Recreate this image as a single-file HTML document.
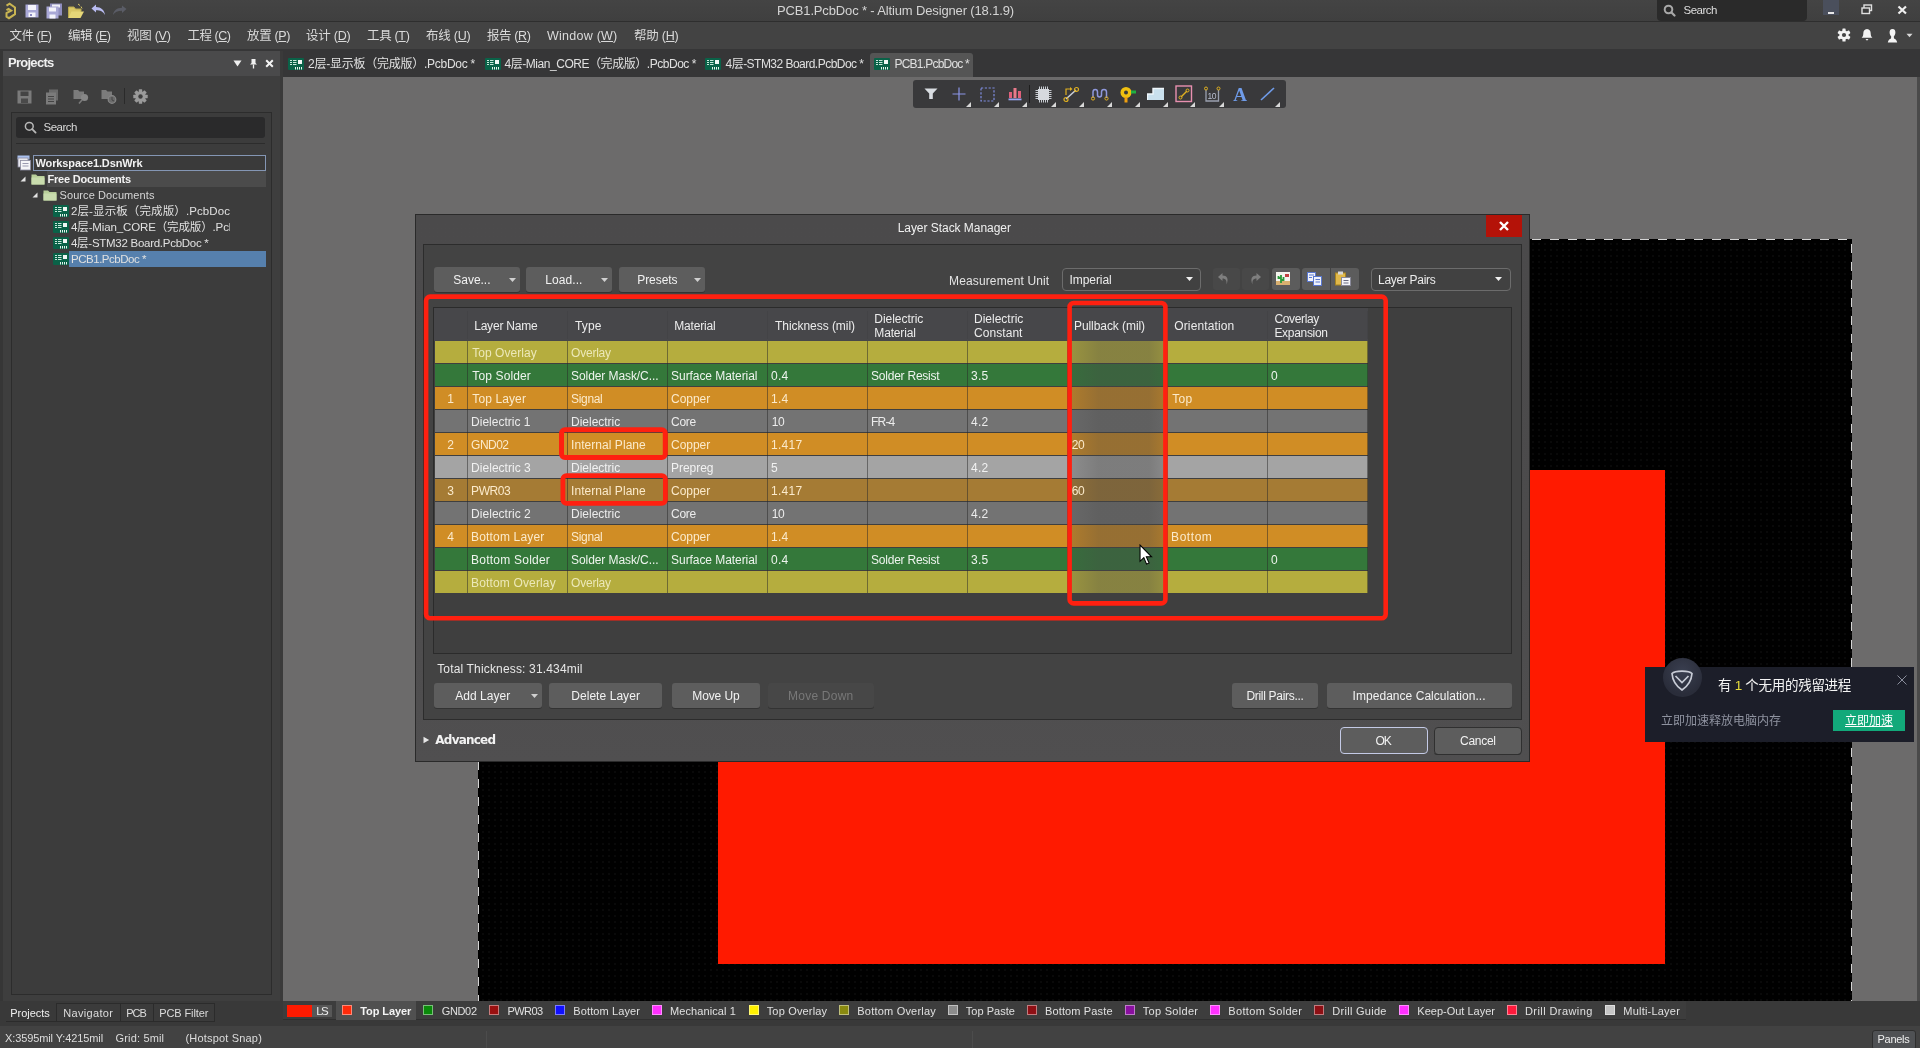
<!DOCTYPE html>
<html lang="zh-CN"><head><meta charset="utf-8"><title>PCB1.PcbDoc * - Altium Designer (18.1.9)</title>
<style>
html,body{margin:0;padding:0;}
body{width:1920px;height:1048px;overflow:hidden;background:#3e3e3e;position:relative;font-family:'Liberation Sans', 'Noto Sans CJK SC', sans-serif;font-size:12px;}
div,svg,span.t{position:absolute;box-sizing:border-box;}
span.t{white-space:pre;line-height:20px;height:20px;}
u{text-decoration:underline;text-underline-offset:1px;}
</style></head><body>
<div id="app" style="left:0;top:0;width:1920px;height:1048px;will-change:transform;">
<div style="left:0px;top:0px;width:1920px;height:22px;background:linear-gradient(180deg,#444444,#3f3f3f);"></div>
<div style="left:0px;top:21px;width:1920px;height:1px;background:#2e2e2e;"></div>
<div style="left:0px;top:22px;width:1920px;height:28px;background:#434343;"></div>
<div style="left:0px;top:49px;width:1920px;height:28px;background:#363637;"></div>
<div style="left:0px;top:51px;width:280px;height:25px;background:#4a4a4b;"></div>
<div style="left:0px;top:76px;width:283px;height:925px;background:#3e3e3e;"></div>
<div style="left:280px;top:51px;width:3px;height:950px;background:#3a3a3a;"></div>
<div style="left:0px;top:51px;width:3px;height:950px;background:#363636;"></div>
<div style="left:283px;top:77px;width:1634px;height:924px;background:#6c6b6b;"></div>
<div style="left:1917px;top:77px;width:3px;height:924px;background:#4a4a4a;"></div>
<div style="left:0px;top:1001px;width:1920px;height:25px;background:#393939;"></div>
<div style="left:0px;top:1026px;width:1920px;height:22px;background:#424242;"></div>
<div style="left:478px;top:239px;width:1374px;height:762px;background:#000000;background-image:radial-gradient(circle, #131313 0.5px, transparent 0.9px);background-size:6px 6px;background-position:2px 2px;"></div>
<svg style="left:478px;top:239px;" width="1374" height="762" viewBox="0 0 1374 762"><path d="M0.5 762 V0.5 H1373.5 V762" fill="none" stroke="#d4d4d4" stroke-width="1" stroke-dasharray="9 9" stroke-dashoffset="3"/></svg>
<div style="left:718px;top:470px;width:947px;height:494px;background:#ff1a00;"></div>
<svg style="left:4px;top:1px;" width="14" height="20" viewBox="0 0 14 20"><path d="M2.5 4.6 L5.6 2.6 L11 6.5 V13.2 L5 17.2 L2.5 15.6 V12.2 L7.2 9.6 L4.6 8 L2.5 9.2" fill="none" stroke="#c9b552" stroke-width="2" stroke-linejoin="miter"/></svg>
<svg style="left:25px;top:4px;" width="14" height="14" viewBox="0 0 14 14"><rect x="0.5" y="0.5" width="13" height="13" fill="#a9a8d6"/><rect x="3" y="1" width="8" height="5" fill="#f4f4fb"/><rect x="3.5" y="8.5" width="7" height="4.5" fill="#f4f4fb"/><rect x="5" y="10" width="2" height="2" fill="#8a89c0"/></svg>
<svg style="left:46px;top:3px;" width="17" height="16" viewBox="0 0 17 16"><rect x="4" y="0.5" width="12" height="12" fill="#8f8ebf"/><rect x="6" y="1.5" width="8" height="3" fill="#efeff8"/><rect x="0.5" y="3.5" width="12" height="12" fill="#a9a8d6"/><rect x="3" y="4.5" width="7" height="4" fill="#f4f4fb"/><rect x="3.5" y="11.5" width="6" height="4" fill="#f4f4fb"/></svg>
<svg style="left:68px;top:3px;" width="17" height="16" viewBox="0 0 17 16"><path d="M0.5 15 V4 H6 L7.5 6 H13 V8.5" fill="#d9c766" stroke="#b9a84c"/><path d="M0.5 15 L3.5 8.5 H16 L12.5 15 Z" fill="#e6d778"/><path d="M10 1 L12 2.5 M13 3.5 L14 5.5" stroke="#d9c766" stroke-width="1"/></svg>
<svg style="left:91px;top:4px;" width="15" height="12" viewBox="0 0 15 12"><path d="M0.5 4.5 L5 0.5 V3 C10 3 13.5 6 14 11 C12 7.5 9.5 6.2 5 6.2 V8.5 Z" fill="#b9bcf2"/></svg>
<svg style="left:112px;top:5px;" width="15" height="11" viewBox="0 0 15 11"><path d="M14.5 4 L10 0.5 V2.7 C5 2.7 1.5 5.5 1 10 C3 7 5.5 5.7 10 5.7 V8 Z" fill="#5a5c66"/></svg>
<span class="t" style="left:777px;top:0.5px;font-size:13px;color:#d4d4d4;letter-spacing:-0.145px;">PCB1.PcbDoc * - Altium Designer (18.1.9)</span>
<div style="left:1657px;top:0px;width:150px;height:21px;background:#2a2a2a;border-radius:0 0 4px 4px;"></div>
<svg style="left:1663px;top:4px;" width="13" height="13" viewBox="0 0 13 13"><circle cx="5.5" cy="5.5" r="3.8" fill="none" stroke="#a8a8a8" stroke-width="2"/><path d="M8.5 8.5 L11.5 11.5" stroke="#a8a8a8" stroke-width="2.2" stroke-linecap="round"/></svg>
<span class="t" style="left:1683.5px;top:0.3px;font-size:11.5px;color:#dedede;letter-spacing:-0.490px;">Search</span>
<div style="left:1823px;top:0px;width:16px;height:15px;background:#4a4f5c;"></div>
<div style="left:1828px;top:12px;width:6px;height:2px;background:#e8e8e8;"></div>
<svg style="left:1861px;top:4px;" width="12" height="11" viewBox="0 0 12 11"><rect x="3" y="1" width="7.5" height="5.5" fill="none" stroke="#e0e0e0" stroke-width="1.4"/><rect x="1" y="4" width="7.5" height="5.5" fill="#3d3d3d" stroke="#e0e0e0" stroke-width="1.4"/></svg>
<svg style="left:1897px;top:5px;" width="11" height="10" viewBox="0 0 11 10"><path d="M1.5 1.5 L9 8.5 M9 1.5 L1.5 8.5" stroke="#f0f0f0" stroke-width="2.2"/></svg>
<span class="t" style="left:9.5px;top:26.2px;font-size:12.5px;color:#dadada;letter-spacing:-0.406px;">文件 (<u>F</u>)</span>
<span class="t" style="left:68px;top:26.2px;font-size:12.5px;color:#dadada;letter-spacing:-0.440px;">编辑 (<u>E</u>)</span>
<span class="t" style="left:127px;top:26.2px;font-size:12.5px;color:#dadada;letter-spacing:-0.273px;">视图 (<u>V</u>)</span>
<span class="t" style="left:187.5px;top:26.2px;font-size:12.5px;color:#dadada;letter-spacing:-0.471px;">工程 (<u>C</u>)</span>
<span class="t" style="left:247px;top:26.2px;font-size:12.5px;color:#dadada;letter-spacing:-0.357px;">放置 (<u>P</u>)</span>
<span class="t" style="left:306px;top:26.2px;font-size:12.5px;color:#dadada;letter-spacing:-0.221px;">设计 (<u>D</u>)</span>
<span class="t" style="left:367px;top:26.2px;font-size:12.5px;color:#dadada;letter-spacing:-0.323px;">工具 (<u>T</u>)</span>
<span class="t" style="left:426px;top:26.2px;font-size:12.5px;color:#dadada;letter-spacing:-0.221px;">布线 (<u>U</u>)</span>
<span class="t" style="left:487px;top:26.2px;font-size:12.5px;color:#dadada;letter-spacing:-0.388px;">报告 (<u>R</u>)</span>
<span class="t" style="left:547px;top:26.2px;font-size:12.5px;color:#dadada;letter-spacing:0.244px;">Window (<u>W</u>)</span>
<span class="t" style="left:634px;top:26.2px;font-size:12.5px;color:#dadada;letter-spacing:-0.221px;">帮助 (<u>H</u>)</span>
<svg style="left:1837px;top:28px;" width="14" height="14" viewBox="0 0 14 14"><g transform="translate(7 7)"><circle r="4.6" fill="#f2f2f2"/><g fill="#f2f2f2"><rect x="-1.6" y="-6.6" width="3.2" height="13.2" rx="0.6"/><rect x="-1.6" y="-6.6" width="3.2" height="13.2" rx="0.6" transform="rotate(60)"/><rect x="-1.6" y="-6.6" width="3.2" height="13.2" rx="0.6" transform="rotate(120)"/></g><circle r="2.1" fill="#434343"/></g></svg>
<svg style="left:1861px;top:28px;" width="12" height="14" viewBox="0 0 12 14"><path d="M6 1 C3.3 1 2.3 3.2 2.3 5.5 C2.3 8 1.5 8.8 0.6 9.8 H11.4 C10.5 8.8 9.7 8 9.7 5.5 C9.7 3.2 8.7 1 6 1 Z" fill="#f2f2f2"/><path d="M4.5 11 H7.5 L6 12.8 Z" fill="#f2f2f2"/></svg>
<svg style="left:1887px;top:28px;" width="11" height="16" viewBox="0 0 11 16"><path d="M5.5 1 C3.2 1 2.6 2.8 2.6 4.6 C2.6 6.3 3.4 7.8 4.2 8.5 L4 10.5 C2.6 11.2 1.2 12 0.8 14.5 H10.2 C9.8 12 8.4 11.2 7 10.5 L6.8 8.5 C7.6 7.8 8.4 6.3 8.4 4.6 C8.4 2.8 7.8 1 5.5 1 Z" fill="#f4f4f4"/></svg>
<svg style="left:1906px;top:33px;" width="7" height="5" viewBox="0 0 7 5"><path d="M0.5 0.8 H6.5 L3.5 4.2 Z" fill="#d8d8d8"/></svg>
<div style="left:870px;top:53px;width:103px;height:24px;background:#555555;border-radius:3px 3px 0 0;"></div>
<svg style="left:288px;top:57.5px;" width="16" height="12" viewBox="0 0 16 12"><rect x="0" y="0" width="16" height="12" rx="1" fill="#0a6248"/><rect x="10" y="2" width="4" height="4" fill="#f0f6f4"/><path d="M2 2.5 H4 M5 2.5 H8.5 M2 4.5 H4 M5 4.5 H8.5 M2 6.5 H4 M5 6.5 H8.5" stroke="#c8eadc" stroke-width="1"/><path d="M7.5 9 V11.5 M9.5 9 V11.5 M11.5 9 V11.5 M13.5 9 V11.5" stroke="#e6f4ee" stroke-width="1"/></svg>
<span class="t" style="left:308px;top:53.5px;font-size:12px;color:#e0e0e0;letter-spacing:-0.252px;">2层-显示板（完成版）.PcbDoc *</span>
<svg style="left:484.5px;top:57.5px;" width="16" height="12" viewBox="0 0 16 12"><rect x="0" y="0" width="16" height="12" rx="1" fill="#0a6248"/><rect x="10" y="2" width="4" height="4" fill="#f0f6f4"/><path d="M2 2.5 H4 M5 2.5 H8.5 M2 4.5 H4 M5 4.5 H8.5 M2 6.5 H4 M5 6.5 H8.5" stroke="#c8eadc" stroke-width="1"/><path d="M7.5 9 V11.5 M9.5 9 V11.5 M11.5 9 V11.5 M13.5 9 V11.5" stroke="#e6f4ee" stroke-width="1"/></svg>
<span class="t" style="left:504.5px;top:53.5px;font-size:12px;color:#e0e0e0;letter-spacing:-0.457px;">4层-Mian_CORE（完成版）.PcbDoc *</span>
<svg style="left:705px;top:57.5px;" width="16" height="12" viewBox="0 0 16 12"><rect x="0" y="0" width="16" height="12" rx="1" fill="#0a6248"/><rect x="10" y="2" width="4" height="4" fill="#f0f6f4"/><path d="M2 2.5 H4 M5 2.5 H8.5 M2 4.5 H4 M5 4.5 H8.5 M2 6.5 H4 M5 6.5 H8.5" stroke="#c8eadc" stroke-width="1"/><path d="M7.5 9 V11.5 M9.5 9 V11.5 M11.5 9 V11.5 M13.5 9 V11.5" stroke="#e6f4ee" stroke-width="1"/></svg>
<span class="t" style="left:725.5px;top:53.5px;font-size:12px;color:#e0e0e0;letter-spacing:-0.524px;">4层-STM32 Board.PcbDoc *</span>
<svg style="left:874px;top:57.5px;" width="16" height="12" viewBox="0 0 16 12"><rect x="0" y="0" width="16" height="12" rx="1" fill="#0a6248"/><rect x="10" y="2" width="4" height="4" fill="#f0f6f4"/><path d="M2 2.5 H4 M5 2.5 H8.5 M2 4.5 H4 M5 4.5 H8.5 M2 6.5 H4 M5 6.5 H8.5" stroke="#c8eadc" stroke-width="1"/><path d="M7.5 9 V11.5 M9.5 9 V11.5 M11.5 9 V11.5 M13.5 9 V11.5" stroke="#e6f4ee" stroke-width="1"/></svg>
<span class="t" style="left:894.5px;top:53.5px;font-size:12px;color:#e0e0e0;letter-spacing:-0.785px;">PCB1.PcbDoc *</span>
<span class="t" style="left:8px;top:53px;font-size:13px;color:#f0f0f0;font-weight:bold;letter-spacing:-0.727px;">Projects</span>
<svg style="left:233px;top:60px;" width="9" height="7" viewBox="0 0 9 7"><path d="M0.5 0.5 H8.5 L4.5 6.5 Z" fill="#f0f0f0"/></svg>
<svg style="left:249px;top:58px;" width="9" height="11" viewBox="0 0 9 11"><path d="M2.5 1 H6.5 V5 L8 6.5 H1 L2.5 5 Z" fill="#f0f0f0"/><path d="M4.5 6.5 V10.5" stroke="#f0f0f0" stroke-width="1.3"/></svg>
<svg style="left:265px;top:59px;" width="9" height="9" viewBox="0 0 9 9"><path d="M1.2 1.2 L7.8 7.8 M7.8 1.2 L1.2 7.8" stroke="#f4f4f4" stroke-width="2"/></svg>
<svg style="left:17px;top:90px;" width="15" height="14" viewBox="0 0 15 14"><rect x="0.5" y="0.5" width="14" height="13" fill="#7b7b7b"/><rect x="3.5" y="1.5" width="8" height="4.5" fill="#444"/><rect x="4" y="8.5" width="7" height="4.5" fill="#4a4a4a"/></svg>
<svg style="left:45px;top:89px;" width="15" height="16" viewBox="0 0 15 16"><rect x="4" y="0.5" width="9" height="11" fill="#6a6a6a"/><rect x="1" y="3.5" width="10" height="12" fill="#7b7b7b"/><path d="M3 7.5 H9 M3 10 H9 M3 12.5 H9" stroke="#444" stroke-width="1"/></svg>
<svg style="left:73px;top:89px;" width="17" height="16" viewBox="0 0 17 16"><path d="M0.5 10 V1 H5 L6.5 2.5 H11 V10 Z" fill="#7b7b7b"/><circle cx="11.5" cy="8.5" r="3.6" fill="#868686"/><path d="M9 11 L6 14.5" stroke="#7b7b7b" stroke-width="1.6"/></svg>
<svg style="left:101px;top:89px;" width="17" height="16" viewBox="0 0 17 16"><path d="M0.5 10 V1 H5 L6.5 2.5 H11 V10 Z" fill="#7b7b7b"/><circle cx="11" cy="10.5" r="3.8" fill="#6a6a6a" stroke="#868686" stroke-width="1.2"/><path d="M11 8 V11 L13 12" stroke="#444" stroke-width="1" fill="none"/></svg>
<div style="left:124px;top:88px;width:1px;height:16px;background:#2a2a2a;"></div>
<svg style="left:133px;top:89px;" width="15" height="15" viewBox="0 0 15 15"><g transform="translate(7.5 7.5)"><circle r="5.2" fill="#9a9a9a"/><g fill="#9a9a9a"><rect x="-1.7" y="-7.2" width="3.4" height="14.4" rx="0.5"/><rect x="-1.7" y="-7.2" width="3.4" height="14.4" rx="0.5" transform="rotate(45)"/><rect x="-1.7" y="-7.2" width="3.4" height="14.4" rx="0.5" transform="rotate(90)"/><rect x="-1.7" y="-7.2" width="3.4" height="14.4" rx="0.5" transform="rotate(135)"/></g><circle r="2.2" fill="#3e3e3e"/></g></svg>
<div style="left:11px;top:112px;width:260.5px;height:883px;background:#3c3c3c;border:1px solid #2c2c2c;"></div>
<div style="left:16px;top:117px;width:249px;height:21px;background:#2a2a2b;border-radius:3px;"></div>
<svg style="left:24px;top:121px;" width="13" height="13" viewBox="0 0 13 13"><circle cx="5.3" cy="5.3" r="3.9" fill="none" stroke="#b8b8b8" stroke-width="1.5"/><path d="M8.2 8.2 L11.6 11.6" stroke="#b8b8b8" stroke-width="1.8" stroke-linecap="round"/></svg>
<span class="t" style="left:43.5px;top:117.3px;font-size:11.5px;color:#d8d8d8;letter-spacing:-0.490px;">Search</span>
<div style="left:16px;top:143px;width:249px;height:1px;background:#2c2c2c;"></div>
<div style="left:33px;top:155px;width:233px;height:16px;background:#3a3a3a;border:1px solid #8496b4;"></div>
<svg style="left:17px;top:155px;" width="16" height="16" viewBox="0 0 16 16"><rect x="0.5" y="0.5" width="12" height="4" fill="#a9c0ee"/><rect x="1" y="3" width="10" height="9" fill="#e8e8ee" stroke="#8a8aa0" stroke-width="0.8"/><rect x="3.5" y="5.5" width="10" height="9.5" fill="#f4f4f8" stroke="#8a8aa0" stroke-width="0.8"/><path d="M5.5 8.5 H11.5 M5.5 11 H11.5" stroke="#9a9ab0" stroke-width="1"/></svg>
<span class="t" style="left:35.5px;top:153px;font-size:11px;color:#f2f2f2;font-weight:bold;letter-spacing:-0.119px;">Workspace1.DsnWrk</span>
<div style="left:47px;top:171px;width:219px;height:16px;background:#4b4b4b;"></div>
<svg style="left:20px;top:176px;" width="6" height="6" viewBox="0 0 6 6"><path d="M5.5 0.5 V5.5 H0.5 Z" fill="#e4e4e4"/></svg>
<svg style="left:30.5px;top:173px;" width="14" height="12" viewBox="0 0 14 12"><path d="M0.5 11.5 V1.5 H5 L6.5 3 H13.5 V11.5 Z" fill="#b9cf9a"/><path d="M0.5 4.5 H13.5 V11.5 H0.5 Z" fill="#c9dcae"/></svg>
<span class="t" style="left:47.5px;top:169px;font-size:11px;color:#f2f2f2;font-weight:bold;letter-spacing:-0.193px;">Free Documents</span>
<svg style="left:32px;top:192px;" width="6" height="6" viewBox="0 0 6 6"><path d="M5.5 0.5 V5.5 H0.5 Z" fill="#e4e4e4"/></svg>
<svg style="left:42.5px;top:189px;" width="14" height="12" viewBox="0 0 14 12"><path d="M0.5 11.5 V1.5 H5 L6.5 3 H13.5 V11.5 Z" fill="#b9cf9a"/><path d="M0.5 4.5 H13.5 V11.5 H0.5 Z" fill="#c9dcae"/></svg>
<span class="t" style="left:59.5px;top:185px;font-size:11px;color:#d6d6d6;letter-spacing:0.091px;">Source Documents</span>
<div style="left:69px;top:251px;width:197px;height:16px;background:#5680ad;"></div>
<svg style="left:52.5px;top:205px;" width="16" height="12" viewBox="0 0 16 12"><rect x="0" y="0" width="16" height="12" rx="1" fill="#0a6248"/><rect x="10" y="2" width="4" height="4" fill="#f0f6f4"/><path d="M2 2.5 H4 M5 2.5 H8.5 M2 4.5 H4 M5 4.5 H8.5 M2 6.5 H4 M5 6.5 H8.5" stroke="#c8eadc" stroke-width="1"/><path d="M7.5 9 V11.5 M9.5 9 V11.5 M11.5 9 V11.5 M13.5 9 V11.5" stroke="#e6f4ee" stroke-width="1"/></svg>
<span class="t" style="left:71px;top:201px;font-size:11.5px;color:#e0e0e0;letter-spacing:0.107px;width:159.4px;overflow:hidden;">2层-显示板（完成版）.PcbDoc *</span>
<svg style="left:52.5px;top:221px;" width="16" height="12" viewBox="0 0 16 12"><rect x="0" y="0" width="16" height="12" rx="1" fill="#0a6248"/><rect x="10" y="2" width="4" height="4" fill="#f0f6f4"/><path d="M2 2.5 H4 M5 2.5 H8.5 M2 4.5 H4 M5 4.5 H8.5 M2 6.5 H4 M5 6.5 H8.5" stroke="#c8eadc" stroke-width="1"/><path d="M7.5 9 V11.5 M9.5 9 V11.5 M11.5 9 V11.5 M13.5 9 V11.5" stroke="#e6f4ee" stroke-width="1"/></svg>
<span class="t" style="left:71px;top:217px;font-size:11.5px;color:#e0e0e0;letter-spacing:-0.131px;width:159.4px;overflow:hidden;">4层-Mian_CORE（完成版）.PcbDoc *</span>
<svg style="left:52.5px;top:237px;" width="16" height="12" viewBox="0 0 16 12"><rect x="0" y="0" width="16" height="12" rx="1" fill="#0a6248"/><rect x="10" y="2" width="4" height="4" fill="#f0f6f4"/><path d="M2 2.5 H4 M5 2.5 H8.5 M2 4.5 H4 M5 4.5 H8.5 M2 6.5 H4 M5 6.5 H8.5" stroke="#c8eadc" stroke-width="1"/><path d="M7.5 9 V11.5 M9.5 9 V11.5 M11.5 9 V11.5 M13.5 9 V11.5" stroke="#e6f4ee" stroke-width="1"/></svg>
<span class="t" style="left:71px;top:233px;font-size:11.5px;color:#e0e0e0;letter-spacing:-0.274px;width:159.4px;overflow:hidden;">4层-STM32 Board.PcbDoc *</span>
<svg style="left:52.5px;top:253px;" width="16" height="12" viewBox="0 0 16 12"><rect x="0" y="0" width="16" height="12" rx="1" fill="#0a6248"/><rect x="10" y="2" width="4" height="4" fill="#f0f6f4"/><path d="M2 2.5 H4 M5 2.5 H8.5 M2 4.5 H4 M5 4.5 H8.5 M2 6.5 H4 M5 6.5 H8.5" stroke="#c8eadc" stroke-width="1"/><path d="M7.5 9 V11.5 M9.5 9 V11.5 M11.5 9 V11.5 M13.5 9 V11.5" stroke="#e6f4ee" stroke-width="1"/></svg>
<span class="t" style="left:71px;top:249px;font-size:11.5px;color:#e0e0e0;letter-spacing:-0.476px;width:159.4px;overflow:hidden;">PCB1.PcbDoc *</span>
<div style="left:913px;top:80px;width:373px;height:28px;background:#39393b;border-radius:3px;"></div>
<svg style="left:965.8px;top:102px;" width="5" height="5" viewBox="0 0 5 5"><path d="M5 0 V5 H0 Z" fill="#d8d8d8"/></svg>
<svg style="left:993.7px;top:102px;" width="5" height="5" viewBox="0 0 5 5"><path d="M5 0 V5 H0 Z" fill="#d8d8d8"/></svg>
<svg style="left:1021.6px;top:102px;" width="5" height="5" viewBox="0 0 5 5"><path d="M5 0 V5 H0 Z" fill="#d8d8d8"/></svg>
<svg style="left:1050.6px;top:102px;" width="5" height="5" viewBox="0 0 5 5"><path d="M5 0 V5 H0 Z" fill="#d8d8d8"/></svg>
<svg style="left:1078.5px;top:102px;" width="5" height="5" viewBox="0 0 5 5"><path d="M5 0 V5 H0 Z" fill="#d8d8d8"/></svg>
<svg style="left:1106.6px;top:102px;" width="5" height="5" viewBox="0 0 5 5"><path d="M5 0 V5 H0 Z" fill="#d8d8d8"/></svg>
<svg style="left:1134.5px;top:102px;" width="5" height="5" viewBox="0 0 5 5"><path d="M5 0 V5 H0 Z" fill="#d8d8d8"/></svg>
<svg style="left:1162.5px;top:102px;" width="5" height="5" viewBox="0 0 5 5"><path d="M5 0 V5 H0 Z" fill="#d8d8d8"/></svg>
<svg style="left:1190.4px;top:102px;" width="5" height="5" viewBox="0 0 5 5"><path d="M5 0 V5 H0 Z" fill="#d8d8d8"/></svg>
<svg style="left:1218.5px;top:102px;" width="5" height="5" viewBox="0 0 5 5"><path d="M5 0 V5 H0 Z" fill="#d8d8d8"/></svg>
<svg style="left:1275px;top:102px;" width="5" height="5" viewBox="0 0 5 5"><path d="M5 0 V5 H0 Z" fill="#d8d8d8"/></svg>
<div style="left:1029px;top:85px;width:1px;height:18px;background:#1e1e1e;"></div>
<svg style="left:924px;top:88px;" width="14" height="12" viewBox="0 0 14 12"><path d="M0.5 0.5 H13.5 L8.8 5.5 V11 H5.2 V5.5 Z" fill="#d9dde2"/></svg>
<svg style="left:952px;top:87px;" width="14" height="14" viewBox="0 0 14 14"><path d="M7 0.5 V13.5 M0.5 7 H13.5" stroke="#8b95e8" stroke-width="1.2"/></svg>
<svg style="left:980px;top:87px;" width="15" height="15" viewBox="0 0 15 15"><rect x="1" y="1" width="13" height="13" fill="none" stroke="#7f8de0" stroke-width="1.2" stroke-dasharray="2.2 1.6"/></svg>
<svg style="left:1008px;top:87px;" width="14" height="14" viewBox="0 0 14 14"><rect x="1" y="5" width="3" height="6" fill="#e0607a"/><rect x="5.5" y="1" width="3" height="10" fill="#e87a8a"/><rect x="10" y="4" width="3" height="7" fill="#e0607a"/><rect x="0.5" y="11.5" width="13" height="1.8" fill="#9aa6f0"/></svg>
<svg style="left:1035px;top:86px;" width="17" height="17" viewBox="0 0 17 17"><rect x="3" y="3" width="11" height="11" fill="#d6d9de"/><path d="M4.5 0.5 V3 M6.5 0.5 V3 M8.5 0.5 V3 M10.5 0.5 V3 M12.5 0.5 V3 M4.5 14 V16.5 M6.5 14 V16.5 M8.5 14 V16.5 M10.5 14 V16.5 M12.5 14 V16.5 M0.5 4.5 H3 M0.5 6.5 H3 M0.5 8.5 H3 M0.5 10.5 H3 M0.5 12.5 H3 M14 4.5 H16.5 M14 6.5 H16.5 M14 8.5 H16.5 M14 10.5 H16.5 M14 12.5 H16.5" stroke="#c8ccd2" stroke-width="1"/></svg>
<svg style="left:1063px;top:86px;" width="17" height="17" viewBox="0 0 17 17"><path d="M3 13 L13 4" stroke="#c9ced6" stroke-width="1.6"/><path d="M3 9 V3 H8" stroke="#e0b020" stroke-width="1.2" fill="none"/><path d="M7 1 L9.5 3 L7 5 Z" fill="#e0b020"/><circle cx="13.5" cy="3.5" r="2" fill="none" stroke="#e0b020" stroke-width="1.2"/><circle cx="3" cy="13.5" r="2" fill="none" stroke="#e0b020" stroke-width="1.2"/></svg>
<svg style="left:1091px;top:87px;" width="18" height="14" viewBox="0 0 18 14"><path d="M2 11 V5 C2 1.5 6.5 1.5 6.5 5 V8 C6.5 10.5 10.5 10.5 10.5 8 V5 C10.5 1.5 15.5 1.5 15.5 5 V11" fill="none" stroke="#8f98dc" stroke-width="1.5"/><circle cx="2" cy="11.5" r="1.6" fill="none" stroke="#e0b020" stroke-width="1"/><circle cx="15.5" cy="11.5" r="1.6" fill="none" stroke="#e0b020" stroke-width="1"/></svg>
<svg style="left:1119px;top:86px;" width="18" height="17" viewBox="0 0 18 17"><circle cx="7" cy="6.5" r="5.5" fill="#f0c010"/><circle cx="7" cy="6.5" r="2" fill="#39393b"/><rect x="5.5" y="11" width="3" height="5.5" fill="#f0a010"/><rect x="12" y="4.5" width="5" height="3" fill="#20b040"/></svg>
<svg style="left:1147px;top:87px;" width="18" height="14" viewBox="0 0 18 14"><path d="M0.5 13 V7 H6 V1.5 H17 V13 Z" fill="#c9e0ee"/><path d="M0.5 13 V7 H6 V1.5 H17" fill="none" stroke="#eef6fb" stroke-width="1.4"/></svg>
<svg style="left:1175px;top:85px;" width="18" height="18" viewBox="0 0 18 18"><rect x="1" y="1" width="15.5" height="15.5" fill="none" stroke="#e890b0" stroke-width="1.4"/><path d="M6 12 L12 6" stroke="#e0b020" stroke-width="1.4"/><circle cx="5.5" cy="12.5" r="1.5" fill="none" stroke="#e0b020" stroke-width="1"/><circle cx="12.5" cy="5.5" r="1.5" fill="none" stroke="#e0b020" stroke-width="1"/></svg>
<svg style="left:1204px;top:86px;" width="17" height="17" viewBox="0 0 17 17"><path d="M2 4 V15 H14.5 V4" fill="none" stroke="#9aa0b0" stroke-width="1.3"/><circle cx="2" cy="2.5" r="1.5" fill="none" stroke="#e0b020" stroke-width="1"/><circle cx="14.5" cy="2.5" r="1.5" fill="none" stroke="#e0b020" stroke-width="1"/></svg>
<span class="t" style="left:1207.57px;top:85.5px;font-size:8.5px;color:#b9bfd0;letter-spacing:-0.5px;">10</span>
<span class="t" style="left:1233.13px;top:84.5px;font-size:19px;color:#6f9be8;font-family:'Liberation Serif', serif;font-weight:bold;">A</span>
<svg style="left:1260px;top:87px;" width="15" height="14" viewBox="0 0 15 14"><path d="M1 13 L14 1" stroke="#6f9be8" stroke-width="1.6"/></svg>
<div style="left:415px;top:214px;width:1115px;height:548px;background:linear-gradient(180deg,#4b4a4b,#4c4b4c 60%,#504f50);border:1px solid #2a2a2a;"></div>
<span class="t" style="left:897.65px;top:217.8px;font-size:12px;color:#f0f0f0;letter-spacing:-0.040px;">Layer Stack Manager</span>
<div style="left:1486px;top:215px;width:36px;height:22px;background:#b41208;"></div>
<svg style="left:1498px;top:220px;" width="12" height="12" viewBox="0 0 12 12"><path d="M2 2 L10 10 M10 2 L2 10" stroke="#ffffff" stroke-width="2.4"/></svg>
<div style="left:423px;top:244px;width:1099px;height:476px;background:#434343;border:1px solid #2c2c2c;"></div>
<div style="left:434px;top:267px;width:86px;height:25px;background:#5d5d5d;border-radius:3px;box-shadow:0 1px 0 #333;"></div>
<span class="t" style="left:453.3px;top:269.8px;font-size:12px;color:#f2f2f2;letter-spacing:-0.023px;">Save...</span>
<svg style="left:508.9px;top:278px;" width="7" height="4" viewBox="0 0 7 4"><path d="M0 0 H7 L3.5 4 Z" fill="#d0d0d0"/></svg>
<div style="left:526px;top:267px;width:86px;height:25px;background:#5d5d5d;border-radius:3px;box-shadow:0 1px 0 #333;"></div>
<span class="t" style="left:545.3px;top:269.8px;font-size:12px;color:#f2f2f2;letter-spacing:0.071px;">Load...</span>
<svg style="left:600.9px;top:278px;" width="7" height="4" viewBox="0 0 7 4"><path d="M0 0 H7 L3.5 4 Z" fill="#d0d0d0"/></svg>
<div style="left:619px;top:267px;width:86px;height:25px;background:#5d5d5d;border-radius:3px;box-shadow:0 1px 0 #333;"></div>
<span class="t" style="left:637.2px;top:269.8px;font-size:12px;color:#f2f2f2;letter-spacing:-0.055px;">Presets</span>
<svg style="left:693.7px;top:278px;" width="7" height="4" viewBox="0 0 7 4"><path d="M0 0 H7 L3.5 4 Z" fill="#d0d0d0"/></svg>
<span class="t" style="left:949px;top:270.8px;font-size:12px;color:#e4e4e4;letter-spacing:0.141px;">Measurement Unit</span>
<div style="left:1061.5px;top:267.5px;width:139.5px;height:23px;background:#414141;border:1px solid #6c6c6c;border-radius:4px;"></div>
<span class="t" style="left:1069.5px;top:269.5px;font-size:12px;color:#ececec;letter-spacing:-0.061px;">Imperial</span>
<svg style="left:1185.5px;top:277px;" width="7" height="4" viewBox="0 0 7 4"><path d="M0 0 H7 L3.5 4 Z" fill="#f0f0f0"/></svg>
<div style="left:1370.5px;top:267.5px;width:140px;height:23px;background:#414141;border:1px solid #6c6c6c;border-radius:4px;"></div>
<span class="t" style="left:1378px;top:269.5px;font-size:12px;color:#ececec;letter-spacing:-0.291px;">Layer Pairs</span>
<svg style="left:1494.5px;top:277px;" width="7" height="4" viewBox="0 0 7 4"><path d="M0 0 H7 L3.5 4 Z" fill="#f0f0f0"/></svg>
<div style="left:1213px;top:268px;width:27px;height:22px;background:#484848;border-radius:3px;"></div>
<div style="left:1242px;top:268px;width:27px;height:22px;background:#484848;border-radius:3px;"></div>
<svg style="left:1217px;top:272px;" width="14" height="14" viewBox="0 0 14 14"><path d="M1 5 L5.5 1 V3.5 C10 3.5 12 6.5 9.5 12.5 C10 8.5 8.5 6.5 5.5 6.5 V9 Z" fill="#7e7e7e"/></svg>
<svg style="left:1248px;top:272px;" width="14" height="14" viewBox="0 0 14 14"><path d="M13 5 L8.5 1 V3.5 C4 3.5 2 6.5 4.5 12.5 C4 8.5 5.5 6.5 8.5 6.5 V9 Z" fill="#7e7e7e"/></svg>
<div style="left:1272px;top:268px;width:28px;height:22px;background:#5c5c5c;border-radius:3px;"></div>
<div style="left:1302px;top:268px;width:28px;height:22px;background:#5c5c5c;border-radius:3px 0 0 3px;"></div>
<div style="left:1331px;top:268px;width:28px;height:22px;background:#5c5c5c;border-radius:0 3px 3px 0;"></div>
<svg style="left:1276px;top:272px;" width="14" height="13" viewBox="0 0 14 13"><rect x="0" y="0" width="14" height="13" fill="#f4f4ee"/><rect x="0" y="9" width="14" height="4" fill="#d9b070"/><path d="M5 11 V3 M5 6 H2.5 V4 M5 8 H7.5 V5" stroke="#2a9a3a" stroke-width="1.8" fill="none"/><rect x="9" y="2" width="4" height="3" fill="#c04040"/></svg>
<svg style="left:1307px;top:272px;" width="16" height="14" viewBox="0 0 16 14"><rect x="0.5" y="0.5" width="8" height="9" fill="#f0f2fa" stroke="#5a78d0" stroke-width="1"/><rect x="6.5" y="4.5" width="8" height="9" fill="#f0f2fa" stroke="#5a78d0" stroke-width="1"/><path d="M2 3 H7 M2 5.5 H5 M8.5 7.5 H13 M8.5 10 H13" stroke="#5a78d0" stroke-width="1"/></svg>
<svg style="left:1335px;top:271px;" width="17" height="15" viewBox="0 0 17 15"><rect x="0.5" y="2" width="10" height="12" fill="#e0b84a" stroke="#a88420" stroke-width="1"/><rect x="3" y="0.5" width="5" height="3" fill="#d8d8d8"/><rect x="6.5" y="6.5" width="9" height="8" fill="#f4f4f8" stroke="#8a8a9a" stroke-width="1"/><path d="M8.5 9.5 H13.5 M8.5 12 H13.5" stroke="#6a6a80" stroke-width="1"/></svg>
<div style="left:433px;top:307px;width:1079px;height:347px;background:#3f3f3f;border:1px solid #2b2b2b;"></div>
<div style="left:434px;top:308px;width:934px;height:33px;background:#47474a;"></div>
<span class="t" style="left:474.2px;top:315.8px;font-size:12px;color:#ececec;letter-spacing:-0.207px;">Layer Name</span>
<span class="t" style="left:575px;top:315.8px;font-size:12px;color:#ececec;letter-spacing:0.171px;">Type</span>
<span class="t" style="left:674.2px;top:315.8px;font-size:12px;color:#ececec;letter-spacing:-0.161px;">Material</span>
<span class="t" style="left:775px;top:315.8px;font-size:12px;color:#ececec;letter-spacing:-0.045px;">Thickness (mil)</span>
<span class="t" style="left:1074px;top:315.8px;font-size:12px;color:#ececec;letter-spacing:-0.073px;">Pullback (mil)</span>
<span class="t" style="left:1174.3px;top:315.8px;font-size:12px;color:#ececec;letter-spacing:0.118px;">Orientation</span>
<span class="t" style="left:874.3px;top:308.5px;font-size:12px;color:#ececec;letter-spacing:-0.034px;">Dielectric</span>
<span class="t" style="left:874.3px;top:322.8px;font-size:12px;color:#ececec;letter-spacing:-0.161px;">Material</span>
<span class="t" style="left:974px;top:308.5px;font-size:12px;color:#ececec;letter-spacing:-0.004px;">Dielectric</span>
<span class="t" style="left:974px;top:322.8px;font-size:12px;color:#ececec;letter-spacing:0.059px;">Constant</span>
<span class="t" style="left:1274.4px;top:308.5px;font-size:12px;color:#ececec;letter-spacing:-0.345px;">Coverlay</span>
<span class="t" style="left:1274.4px;top:322.8px;font-size:12px;color:#ececec;letter-spacing:-0.305px;">Expansion</span>
<div style="left:435px;top:341px;width:932.5px;height:22px;background:#b5ad3e;"></div>
<div style="left:435px;top:364px;width:932.5px;height:22px;background:#34783a;"></div>
<div style="left:435px;top:387px;width:932.5px;height:22px;background:#d08d25;"></div>
<div style="left:435px;top:410px;width:932.5px;height:22px;background:#737373;"></div>
<div style="left:435px;top:433px;width:932.5px;height:22px;background:#d08d25;"></div>
<div style="left:435px;top:456px;width:932.5px;height:22px;background:#a4a4a4;"></div>
<div style="left:435px;top:479px;width:932.5px;height:22px;background:#a57b34;"></div>
<div style="left:435px;top:502px;width:932.5px;height:22px;background:#737373;"></div>
<div style="left:435px;top:525px;width:932.5px;height:22px;background:#d08d25;"></div>
<div style="left:435px;top:548px;width:932.5px;height:22px;background:#34783a;"></div>
<div style="left:435px;top:571px;width:932.5px;height:22px;background:#b5ad3e;"></div>
<div style="left:1071px;top:341px;width:92px;height:252px;background:linear-gradient(90deg, rgba(70,70,70,0.25), rgba(70,70,70,0.42) 30%, rgba(70,70,70,0.42) 85%, rgba(70,70,70,0.3));"></div>
<span class="t" style="left:472.3px;top:342.5px;font-size:12px;color:#ece8b8;letter-spacing:0.034px;">Top Overlay</span>
<span class="t" style="left:571.1px;top:342.5px;font-size:12px;color:#ece8b8;letter-spacing:-0.235px;">Overlay</span>
<span class="t" style="left:472.3px;top:365.5px;font-size:12px;color:#eef4ee;letter-spacing:0.133px;">Top Solder</span>
<span class="t" style="left:571.1px;top:365.5px;font-size:12px;color:#eef4ee;letter-spacing:-0.088px;">Solder Mask/C...</span>
<span class="t" style="left:671.1px;top:365.5px;font-size:12px;color:#eef4ee;letter-spacing:-0.067px;">Surface Material</span>
<span class="t" style="left:771.1px;top:365.5px;font-size:12px;color:#eef4ee;letter-spacing:0.204px;">0.4</span>
<span class="t" style="left:871.1px;top:365.5px;font-size:12px;color:#eef4ee;letter-spacing:-0.237px;">Solder Resist</span>
<span class="t" style="left:971.1px;top:365.5px;font-size:12px;color:#eef4ee;letter-spacing:0.204px;">3.5</span>
<span class="t" style="left:1271.1px;top:365.5px;font-size:12px;color:#eef4ee;letter-spacing:0.013px;">0</span>
<span class="t" style="left:447.156px;top:388.5px;font-size:12px;color:#fbeacb;">1</span>
<span class="t" style="left:472.3px;top:388.5px;font-size:12px;color:#fbeacb;letter-spacing:0.111px;">Top Layer</span>
<span class="t" style="left:571.1px;top:388.5px;font-size:12px;color:#fbeacb;letter-spacing:-0.343px;">Signal</span>
<span class="t" style="left:671.1px;top:388.5px;font-size:12px;color:#fbeacb;letter-spacing:-0.060px;">Copper</span>
<span class="t" style="left:771.1px;top:388.5px;font-size:12px;color:#fbeacb;letter-spacing:0.204px;">1.4</span>
<span class="t" style="left:1172.3px;top:388.5px;font-size:12px;color:#fbeacb;letter-spacing:0.214px;">Top</span>
<span class="t" style="left:471.1px;top:411.5px;font-size:12px;color:#ececec;letter-spacing:-0.005px;">Dielectric 1</span>
<span class="t" style="left:571.1px;top:411.5px;font-size:12px;color:#ececec;letter-spacing:-0.034px;">Dielectric</span>
<span class="t" style="left:671.1px;top:411.5px;font-size:12px;color:#ececec;letter-spacing:-0.329px;">Core</span>
<span class="t" style="left:771.7px;top:411.5px;font-size:12px;color:#ececec;letter-spacing:-0.380px;">10</span>
<span class="t" style="left:871.1px;top:411.5px;font-size:12px;color:#ececec;letter-spacing:-0.843px;">FR-4</span>
<span class="t" style="left:971.1px;top:411.5px;font-size:12px;color:#ececec;letter-spacing:0.204px;">4.2</span>
<span class="t" style="left:447.156px;top:434.5px;font-size:12px;color:#fbeacb;">2</span>
<span class="t" style="left:471.1px;top:434.5px;font-size:12px;color:#fbeacb;letter-spacing:-0.543px;">GND02</span>
<span class="t" style="left:571.1px;top:434.5px;font-size:12px;color:#fbeacb;letter-spacing:0.046px;">Internal Plane</span>
<span class="t" style="left:671.1px;top:434.5px;font-size:12px;color:#fbeacb;letter-spacing:-0.060px;">Copper</span>
<span class="t" style="left:771.1px;top:434.5px;font-size:12px;color:#fbeacb;letter-spacing:0.254px;">1.417</span>
<span class="t" style="left:1071.7px;top:434.5px;font-size:12px;color:#fbeacb;letter-spacing:-0.380px;">20</span>
<span class="t" style="left:471.1px;top:457.5px;font-size:12px;color:#f2f2f2;letter-spacing:0.028px;">Dielectric 3</span>
<span class="t" style="left:571.1px;top:457.5px;font-size:12px;color:#f2f2f2;letter-spacing:-0.034px;">Dielectric</span>
<span class="t" style="left:671.1px;top:457.5px;font-size:12px;color:#f2f2f2;letter-spacing:-0.058px;">Prepreg</span>
<span class="t" style="left:771.1px;top:457.5px;font-size:12px;color:#f2f2f2;letter-spacing:0.013px;">5</span>
<span class="t" style="left:971.1px;top:457.5px;font-size:12px;color:#f2f2f2;letter-spacing:0.204px;">4.2</span>
<span class="t" style="left:447.156px;top:480.5px;font-size:12px;color:#fbeacb;">3</span>
<span class="t" style="left:471.1px;top:480.5px;font-size:12px;color:#fbeacb;letter-spacing:-0.469px;">PWR03</span>
<span class="t" style="left:571.1px;top:480.5px;font-size:12px;color:#fbeacb;letter-spacing:0.046px;">Internal Plane</span>
<span class="t" style="left:671.1px;top:480.5px;font-size:12px;color:#fbeacb;letter-spacing:-0.060px;">Copper</span>
<span class="t" style="left:771.1px;top:480.5px;font-size:12px;color:#fbeacb;letter-spacing:0.254px;">1.417</span>
<span class="t" style="left:1071.7px;top:480.5px;font-size:12px;color:#fbeacb;letter-spacing:-0.380px;">60</span>
<span class="t" style="left:471.1px;top:503.5px;font-size:12px;color:#ececec;letter-spacing:0.028px;">Dielectric 2</span>
<span class="t" style="left:571.1px;top:503.5px;font-size:12px;color:#ececec;letter-spacing:-0.034px;">Dielectric</span>
<span class="t" style="left:671.1px;top:503.5px;font-size:12px;color:#ececec;letter-spacing:-0.329px;">Core</span>
<span class="t" style="left:771.7px;top:503.5px;font-size:12px;color:#ececec;letter-spacing:-0.380px;">10</span>
<span class="t" style="left:971.1px;top:503.5px;font-size:12px;color:#ececec;letter-spacing:0.204px;">4.2</span>
<span class="t" style="left:447.156px;top:526.5px;font-size:12px;color:#fbeacb;">4</span>
<span class="t" style="left:471.1px;top:526.5px;font-size:12px;color:#fbeacb;letter-spacing:0.160px;">Bottom Layer</span>
<span class="t" style="left:571.1px;top:526.5px;font-size:12px;color:#fbeacb;letter-spacing:-0.343px;">Signal</span>
<span class="t" style="left:671.1px;top:526.5px;font-size:12px;color:#fbeacb;letter-spacing:-0.060px;">Copper</span>
<span class="t" style="left:771.1px;top:526.5px;font-size:12px;color:#fbeacb;letter-spacing:0.204px;">1.4</span>
<span class="t" style="left:1171.1px;top:526.5px;font-size:12px;color:#fbeacb;letter-spacing:0.547px;">Bottom</span>
<span class="t" style="left:471.1px;top:549.5px;font-size:12px;color:#eef4ee;letter-spacing:0.227px;">Bottom Solder</span>
<span class="t" style="left:571.1px;top:549.5px;font-size:12px;color:#eef4ee;letter-spacing:-0.088px;">Solder Mask/C...</span>
<span class="t" style="left:671.1px;top:549.5px;font-size:12px;color:#eef4ee;letter-spacing:-0.067px;">Surface Material</span>
<span class="t" style="left:771.1px;top:549.5px;font-size:12px;color:#eef4ee;letter-spacing:0.204px;">0.4</span>
<span class="t" style="left:871.1px;top:549.5px;font-size:12px;color:#eef4ee;letter-spacing:-0.237px;">Solder Resist</span>
<span class="t" style="left:971.1px;top:549.5px;font-size:12px;color:#eef4ee;letter-spacing:0.204px;">3.5</span>
<span class="t" style="left:1271.1px;top:549.5px;font-size:12px;color:#eef4ee;letter-spacing:0.013px;">0</span>
<span class="t" style="left:471.1px;top:572.5px;font-size:12px;color:#ece8b8;letter-spacing:0.143px;">Bottom Overlay</span>
<span class="t" style="left:571.1px;top:572.5px;font-size:12px;color:#ece8b8;letter-spacing:-0.235px;">Overlay</span>
<div style="left:467px;top:341px;width:1px;height:252px;background:rgba(40,40,40,0.5);"></div>
<div style="left:467px;top:311px;width:1px;height:28px;background:rgba(60,60,62,0.35);"></div>
<div style="left:567px;top:341px;width:1px;height:252px;background:rgba(40,40,40,0.5);"></div>
<div style="left:567px;top:311px;width:1px;height:28px;background:rgba(60,60,62,0.35);"></div>
<div style="left:667px;top:341px;width:1px;height:252px;background:rgba(40,40,40,0.5);"></div>
<div style="left:667px;top:311px;width:1px;height:28px;background:rgba(60,60,62,0.35);"></div>
<div style="left:767px;top:341px;width:1px;height:252px;background:rgba(40,40,40,0.5);"></div>
<div style="left:767px;top:311px;width:1px;height:28px;background:rgba(60,60,62,0.35);"></div>
<div style="left:867px;top:341px;width:1px;height:252px;background:rgba(40,40,40,0.5);"></div>
<div style="left:867px;top:311px;width:1px;height:28px;background:rgba(60,60,62,0.35);"></div>
<div style="left:967px;top:341px;width:1px;height:252px;background:rgba(40,40,40,0.5);"></div>
<div style="left:967px;top:311px;width:1px;height:28px;background:rgba(60,60,62,0.35);"></div>
<div style="left:1067px;top:341px;width:1px;height:252px;background:rgba(40,40,40,0.5);"></div>
<div style="left:1067px;top:311px;width:1px;height:28px;background:rgba(60,60,62,0.35);"></div>
<div style="left:1167px;top:341px;width:1px;height:252px;background:rgba(40,40,40,0.5);"></div>
<div style="left:1167px;top:311px;width:1px;height:28px;background:rgba(60,60,62,0.35);"></div>
<div style="left:1267px;top:341px;width:1px;height:252px;background:rgba(40,40,40,0.5);"></div>
<div style="left:1267px;top:311px;width:1px;height:28px;background:rgba(60,60,62,0.35);"></div>
<div style="left:1367px;top:341px;width:1px;height:252px;background:rgba(40,40,40,0.5);"></div>
<div style="left:1367px;top:311px;width:1px;height:28px;background:rgba(60,60,62,0.35);"></div>
<svg style="left:421px;top:292px;" width="971" height="332" viewBox="0 0 971 332"><rect x="5.1" y="4.6" width="959.6" height="321.7" rx="4" fill="none" stroke="#ff2010" stroke-width="4.6"/></svg>
<svg style="left:1065px;top:298px;" width="106" height="311" viewBox="0 0 106 311"><rect x="4.6" y="5" width="95.8" height="300.4" rx="4" fill="none" stroke="#ff2010" stroke-width="4.6"/></svg>
<svg style="left:557px;top:425px;" width="114" height="39" viewBox="0 0 114 39"><rect x="4.5" y="4.7" width="103.8" height="27.8" rx="3.5" fill="none" stroke="#ff2010" stroke-width="5"/></svg>
<svg style="left:558px;top:471px;" width="113" height="38" viewBox="0 0 113 38"><rect x="4.9" y="4.6" width="102.5" height="27.8" rx="3.5" fill="none" stroke="#ff2010" stroke-width="4.8"/></svg>
<span class="t" style="left:437.2px;top:658.5px;font-size:12px;color:#e8e8e8;letter-spacing:0.162px;">Total Thickness: 31.434mil</span>
<div style="left:434px;top:683px;width:108px;height:25px;background:#5d5d5d;border-radius:3px;box-shadow:0 1px 0 #333;"></div>
<span class="t" style="left:455.3px;top:685.8px;font-size:12px;color:#f2f2f2;letter-spacing:0.033px;">Add Layer</span>
<svg style="left:531px;top:694px;" width="7" height="4" viewBox="0 0 7 4"><path d="M0 0 H7 L3.5 4 Z" fill="#d0d0d0"/></svg>
<div style="left:549px;top:683px;width:113px;height:25px;background:#5d5d5d;border-radius:3px;box-shadow:0 1px 0 #333;"></div>
<span class="t" style="left:571.2px;top:685.8px;font-size:12px;color:#f2f2f2;letter-spacing:0.063px;">Delete Layer</span>
<div style="left:672px;top:683px;width:87.5px;height:25px;background:#5d5d5d;border-radius:3px;box-shadow:0 1px 0 #333;"></div>
<span class="t" style="left:692.3px;top:685.8px;font-size:12px;color:#f2f2f2;letter-spacing:-0.119px;">Move Up</span>
<div style="left:768px;top:683px;width:106px;height:25px;background:#474747;border-radius:3px;box-shadow:0 1px 0 #333;"></div>
<span class="t" style="left:788px;top:685.8px;font-size:12px;color:#787878;letter-spacing:0.238px;">Move Down</span>
<div style="left:1232px;top:683px;width:86.3px;height:25px;background:#5d5d5d;border-radius:3px;box-shadow:0 1px 0 #333;"></div>
<span class="t" style="left:1246.4px;top:685.8px;font-size:12px;color:#f2f2f2;letter-spacing:-0.296px;">Drill Pairs...</span>
<div style="left:1327px;top:683px;width:185.3px;height:25px;background:#5d5d5d;border-radius:3px;box-shadow:0 1px 0 #333;"></div>
<span class="t" style="left:1352.6px;top:685.8px;font-size:12px;color:#f2f2f2;letter-spacing:0.038px;">Impedance Calculation...</span>
<svg style="left:423px;top:736px;" width="7" height="8" viewBox="0 0 7 8"><path d="M0.5 0.8 L6.2 4 L0.5 7.2 Z" fill="#e6e6e6"/></svg>
<span class="t" style="left:435.3px;top:729.8px;font-size:12px;color:#f2f2f2;font-family:'DejaVu Sans', 'Liberation Sans', sans-serif;font-weight:bold;letter-spacing:-0.773px;">Advanced</span>
<div style="left:1340px;top:727px;width:88px;height:27px;background:#5d5d5d;border-radius:4px;border:1px solid #c4cae6;"></div>
<span class="t" style="left:1375.5px;top:730.8px;font-size:12px;color:#f2f2f2;letter-spacing:-1.022px;">OK</span>
<div style="left:1434.3px;top:727.5px;width:87.2px;height:26.5px;background:#5d5d5d;border-radius:3px;box-shadow:0 1px 0 #333;"></div>
<span class="t" style="left:1460px;top:731.05px;font-size:12px;color:#f2f2f2;letter-spacing:-0.277px;">Cancel</span>
<div style="left:1434px;top:727px;width:88px;height:27.5px;border:1px solid #303030;border-radius:4px;"></div>
<div style="left:1645px;top:667px;width:269px;height:75px;background:#1c1e29;"></div>
<div style="left:1662.5px;top:657.5px;width:39.5px;height:39.5px;background:radial-gradient(circle at 50% 35%, #3a3f50, #2a2d3a 70%);border-radius:50%;"></div>
<svg style="left:1669px;top:666px;" width="26" height="26" viewBox="0 0 26 26"><path d="M3 7.5 C6 4.2 20 4.2 23 7.5 C22.5 14 19 20 13 24 C7 20 3.5 14 3 7.5 Z" fill="none" stroke="#c8ccd6" stroke-width="1.7"/><path d="M6.5 10 L13 16.5 L19.5 10" fill="none" stroke="#c8ccd6" stroke-width="1.7"/></svg>
<span class="t" style="left:1718px;top:676.4px;font-size:13.5px;color:#f4f4f4;letter-spacing:-0.293px;">有 <span style="color:#e6dc3c">1</span> 个无用的残留进程</span>
<svg style="left:1897px;top:675px;" width="10" height="10" viewBox="0 0 10 10"><path d="M0.5 0.5 L9.5 9.5 M9.5 0.5 L0.5 9.5" stroke="#8a8e9c" stroke-width="1"/></svg>
<span class="t" style="left:1661px;top:710.5px;font-size:12px;color:#8f93a0;letter-spacing:-0.002px;">立即加速释放电脑内存</span>
<div style="left:1833px;top:710px;width:72px;height:21px;background:#12a97a;"></div>
<span class="t" style="left:1845px;top:710.5px;font-size:12px;color:#ffffff;letter-spacing:-0.004px;text-decoration:underline;text-underline-offset:1px;">立即加速</span>
<div style="left:56px;top:1003px;width:159px;height:19px;background:#3b3b3b;border:1px solid #2b2b2b;"></div>
<div style="left:119.5px;top:1003px;width:1px;height:19px;background:#2b2b2b;"></div>
<div style="left:152.5px;top:1003px;width:1px;height:19px;background:#2b2b2b;"></div>
<div style="left:6px;top:1021px;width:50px;height:1px;background:#2b2b2b;"></div>
<span class="t" style="left:10.3px;top:1003px;font-size:11px;color:#f0f0f0;letter-spacing:-0.044px;">Projects</span>
<span class="t" style="left:63.3px;top:1003px;font-size:11px;color:#dcdcdc;letter-spacing:0.325px;">Navigator</span>
<span class="t" style="left:126.3px;top:1003px;font-size:11px;color:#dcdcdc;letter-spacing:-1.042px;">PCB</span>
<span class="t" style="left:159.2px;top:1003px;font-size:11px;color:#dcdcdc;letter-spacing:-0.102px;">PCB Filter</span>
<div style="left:283px;top:1001px;width:1403px;height:19px;background:#3d3d3d;border-bottom:1px solid #2f2f2f;"></div>
<div style="left:286.5px;top:1005px;width:25px;height:12px;background:#ff1a00;"></div>
<div style="left:311.5px;top:1005px;width:20px;height:12px;background:#575757;"></div>
<span class="t" style="left:316.3px;top:1001.3px;font-size:11.5px;color:#ececec;letter-spacing:-1.689px;">LS</span>
<div style="left:336px;top:1001px;width:80px;height:19px;background:#505050;"></div>
<div style="left:341.7px;top:1005.3px;width:10.3px;height:10px;background:#ff2a0a;border:1px solid rgba(255,255,255,0.45);"></div>
<span class="t" style="left:360.3px;top:1000.7px;font-size:11px;color:#f4f4f4;font-weight:bold;letter-spacing:-0.096px;">Top Layer</span>
<div style="left:422.8px;top:1005.3px;width:10.3px;height:10px;background:#0a8a0a;border:1px solid rgba(255,255,255,0.45);"></div>
<span class="t" style="left:441.7px;top:1000.7px;font-size:11px;color:#e0e0e0;letter-spacing:-0.338px;">GND02</span>
<div style="left:488.8px;top:1005.3px;width:10.3px;height:10px;background:#9a1010;border:1px solid rgba(255,255,255,0.45);"></div>
<span class="t" style="left:507.5px;top:1000.7px;font-size:11px;color:#e0e0e0;letter-spacing:-0.581px;">PWR03</span>
<div style="left:555px;top:1005.3px;width:10.3px;height:10px;background:#1010ff;border:1px solid rgba(255,255,255,0.45);"></div>
<span class="t" style="left:573.3px;top:1000.7px;font-size:11px;color:#e0e0e0;letter-spacing:0.107px;">Bottom Layer</span>
<div style="left:651.7px;top:1005.3px;width:10.3px;height:10px;background:#ff30ff;border:1px solid rgba(255,255,255,0.45);"></div>
<span class="t" style="left:670px;top:1000.7px;font-size:11px;color:#e0e0e0;letter-spacing:0.098px;">Mechanical 1</span>
<div style="left:749px;top:1005.3px;width:10.3px;height:10px;background:#fff000;border:1px solid rgba(255,255,255,0.45);"></div>
<span class="t" style="left:766.7px;top:1000.7px;font-size:11px;color:#e0e0e0;letter-spacing:0.172px;">Top Overlay</span>
<div style="left:839px;top:1005.3px;width:10.3px;height:10px;background:#8a8a10;border:1px solid rgba(255,255,255,0.45);"></div>
<span class="t" style="left:857.3px;top:1000.7px;font-size:11px;color:#e0e0e0;letter-spacing:0.206px;">Bottom Overlay</span>
<div style="left:947.7px;top:1005.3px;width:10.3px;height:10px;background:#8c8c8c;border:1px solid rgba(255,255,255,0.45);"></div>
<span class="t" style="left:965.7px;top:1000.7px;font-size:11px;color:#e0e0e0;letter-spacing:0.042px;">Top Paste</span>
<div style="left:1026.8px;top:1005.3px;width:10.3px;height:10px;background:#8e0f14;border:1px solid rgba(255,255,255,0.45);"></div>
<span class="t" style="left:1045px;top:1000.7px;font-size:11px;color:#e0e0e0;letter-spacing:0.138px;">Bottom Paste</span>
<div style="left:1125px;top:1005.3px;width:10.3px;height:10px;background:#8a10a0;border:1px solid rgba(255,255,255,0.45);"></div>
<span class="t" style="left:1142.7px;top:1000.7px;font-size:11px;color:#e0e0e0;letter-spacing:0.301px;">Top Solder</span>
<div style="left:1210px;top:1005.3px;width:10.3px;height:10px;background:#ff30ff;border:1px solid rgba(255,255,255,0.45);"></div>
<span class="t" style="left:1228.3px;top:1000.7px;font-size:11px;color:#e0e0e0;letter-spacing:0.331px;">Bottom Solder</span>
<div style="left:1314px;top:1005.3px;width:10.3px;height:10px;background:#8e0f14;border:1px solid rgba(255,255,255,0.45);"></div>
<span class="t" style="left:1332.3px;top:1000.7px;font-size:11px;color:#e0e0e0;letter-spacing:0.276px;">Drill Guide</span>
<div style="left:1399px;top:1005.3px;width:10.3px;height:10px;background:#ff30ff;border:1px solid rgba(255,255,255,0.45);"></div>
<span class="t" style="left:1417.3px;top:1000.7px;font-size:11px;color:#e0e0e0;letter-spacing:0.003px;">Keep-Out Layer</span>
<div style="left:1506.8px;top:1005.3px;width:10.3px;height:10px;background:#ff1a3c;border:1px solid rgba(255,255,255,0.45);"></div>
<span class="t" style="left:1525px;top:1000.7px;font-size:11px;color:#e0e0e0;letter-spacing:0.412px;">Drill Drawing</span>
<div style="left:1604.5px;top:1005.3px;width:10.3px;height:10px;background:#c4c4c4;border:1px solid rgba(255,255,255,0.45);"></div>
<span class="t" style="left:1623.3px;top:1000.7px;font-size:11px;color:#e0e0e0;letter-spacing:0.209px;">Multi-Layer</span>
<span class="t" style="left:5px;top:1028.3px;font-size:11px;color:#dcdcdc;letter-spacing:-0.110px;">X:3595mil Y:4215mil</span>
<span class="t" style="left:115.5px;top:1028.3px;font-size:11px;color:#dcdcdc;letter-spacing:0.164px;">Grid: 5mil</span>
<span class="t" style="left:185.5px;top:1028.3px;font-size:11px;color:#dcdcdc;letter-spacing:0.180px;">(Hotspot Snap)</span>
<div style="left:1872px;top:1030px;width:43.5px;height:20px;background:#4f5154;border:1px solid #2e2e2e;border-radius:3px;"></div>
<span class="t" style="left:1877.5px;top:1029.3px;font-size:11px;color:#f0f0f0;letter-spacing:-0.273px;">Panels</span>
<svg style="left:1139.3px;top:544.4px;" width="14.7" height="22" viewBox="0 0 14 21"><path d="M1 1 V16.5 L4.6 13 L7.2 19.2 L9.6 18.2 L7 12.2 H12 Z" fill="#ffffff" stroke="#000000" stroke-width="1"/></svg>
<div style="left:485.5px;top:1031px;width:1px;height:17px;background:#4c4c4c;"></div>
<div style="left:972px;top:1031px;width:1px;height:17px;background:#4c4c4c;"></div>
</div>
</body></html>
